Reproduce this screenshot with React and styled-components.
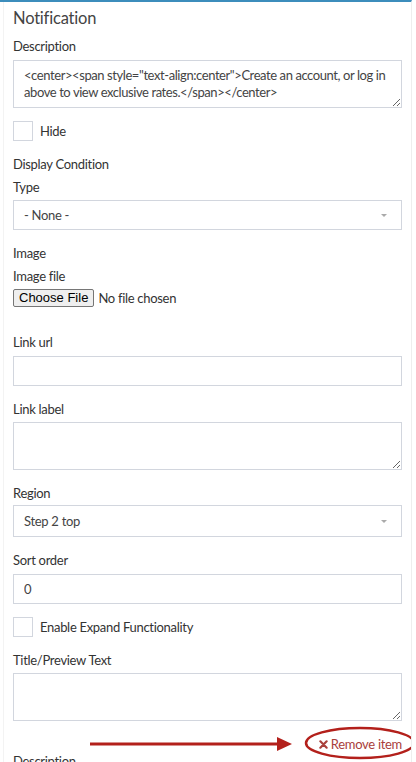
import React from "react";
import styled, { createGlobalStyle } from "styled-components";

const GlobalStyle = createGlobalStyle`
  body {
    margin: 0;
    background: #fff;
    font-family: "Source Sans Pro", Lato, "Open Sans", sans-serif;
    letter-spacing: -0.3px;
    color: #333;
  }
`;

const Panel = styled.div`
  width: 411px;
  border-top: 2px solid #3c8dbc;
  border-right: 1px solid #eeeeee;
  height: 760px;
  overflow: hidden;
`;

const Inner = styled.div`
  margin-left: 3px;
  border-left: 1px solid #f3f3f3;
  padding: 4px 9px 0 9px;
  min-height: 100%;
`;

const Title = styled.h3`
  margin: 0 0 6px;
  font-size: 16.5px;
  line-height: 24px;
  font-weight: 400;
  letter-spacing: -0.2px;
  color: #444;
`;

const Group = styled.div`
  margin-bottom: ${(p) => (p.$tight ? "3px" : "13px")};
`;

const Label = styled.div`
  font-size: 13px;
  line-height: 20px;
  color: #333;
  margin-bottom: ${(p) => (p.$gap ? p.$gap : "4px")};
`;

const TextArea = styled.textarea`
  display: block;
  box-sizing: border-box;
  width: 100%;
  height: 48px;
  margin: 0;
  padding: 6px 10px;
  border: 1px solid #d2d6de;
  border-radius: 0;
  font-family: inherit;
  font-size: 13px;
  letter-spacing: -0.42px;
  line-height: 17px;
  color: #444;
  resize: vertical;
  outline: none;
`;

const Input = styled.input`
  display: block;
  box-sizing: border-box;
  width: 100%;
  height: 30px;
  margin: 0;
  padding: 0 10px;
  border: 1px solid #d2d6de;
  border-radius: 0;
  font-family: inherit;
  font-size: 13px;
  color: #444;
  outline: none;
`;

const Select = styled.div`
  display: flex;
  align-items: center;
  justify-content: space-between;
  box-sizing: border-box;
  height: ${(p) => p.$h || "30px"};
  padding: 0 14px 0 10px;
  border: 1px solid #d2d6de;
  font-size: 13px;
  color: #444;
`;

const Caret = styled.span`
  width: 0;
  height: 0;
  border-left: 3px solid transparent;
  border-right: 3px solid transparent;
  border-top: 3px solid #aaa;
`;

const CheckRow = styled.label`
  display: flex;
  align-items: center;
  gap: 7px;
  font-size: 13px;
  color: #333;
  margin-bottom: 13px;
`;

const Box = styled.span`
  box-sizing: border-box;
  width: 20px;
  height: 20px;
  border: 1px solid #d2d6de;
  background: #fff;
`;

const FileRow = styled.div`
  display: flex;
  align-items: center;
  gap: 4px;
  margin-bottom: 25px;
  font-size: 13px;
  color: #333;
`;

const FileButton = styled.button`
  box-sizing: border-box;
  height: 18px;
  padding: 0 5px;
  border: 1px solid #767676;
  border-radius: 2px;
  background: #efefef;
  font-family: "Liberation Sans", Arial, sans-serif;
  font-size: 13px;
  letter-spacing: 0;
  color: #000;
  line-height: 16px;
`;

const RemoveRow = styled.div`
  position: relative;
  display: flex;
  justify-content: flex-end;
  margin-top: 15px;
  height: 17px;
  margin-bottom: -2px;
`;

const RemoveLink = styled.a`
  display: flex;
  align-items: center;
  gap: 3px;
  font-size: 13px;
  line-height: 17px;
  color: #a9403b;
  text-decoration: none;
`;

const Annotation = styled.svg`
  position: absolute;
  left: -13px;
  top: -17px;
  pointer-events: none;
`;

export default function App() {
  return (
    <>
      <GlobalStyle />
      <Panel>
        <Inner>
          <Title>Notification</Title>

          <Group>
            <Label>Description</Label>
            <TextArea
              defaultValue={
                '<center><span style="text-align:center">Create an account, or log in above to view exclusive rates.</span></center>'
              }
            />
          </Group>

          <CheckRow>
            <Box />
            Hide
          </CheckRow>

          <Label $gap="3px">Display Condition</Label>
          <Group>
            <Label $gap="3px">Type</Label>
            <Select>
              - None -
              <Caret />
            </Select>
          </Group>

          <Label $gap="3px">Image</Label>
          <Label $gap="3px">Image file</Label>
          <FileRow>
            <FileButton type="button">Choose File</FileButton>
            No file chosen
          </FileRow>

          <Group>
            <Label>Link url</Label>
            <Input />
          </Group>

          <Group>
            <Label $gap="3px">Link label</Label>
            <TextArea />
          </Group>

          <Group>
            <Label $gap="2px">Region</Label>
            <Select $h="32px">
              Step 2 top
              <Caret />
            </Select>
          </Group>

          <Group>
            <Label>Sort order</Label>
            <Input defaultValue="0" />
          </Group>

          <CheckRow>
            <Box />
            Enable Expand Functionality
          </CheckRow>

          <Group $tight>
            <Label $gap="3px">Title/Preview Text</Label>
            <TextArea />
          </Group>

          <RemoveRow>
            <RemoveLink href="#">
              <svg width="9" height="9" viewBox="0 0 10 10">
                <path d="M1.5 1.5 L8.5 8.5 M8.5 1.5 L1.5 8.5" stroke="#a9403b" strokeWidth="2.4" strokeLinecap="round" />
              </svg>
              Remove item
            </RemoveLink>
            <Annotation width="416" height="50" viewBox="0 0 416 50">
              <line x1="90" y1="25" x2="280" y2="25" stroke="#b3201b" strokeWidth="3" />
              <polygon points="277,18 292,25 277,32" fill="#b3201b" />
              <ellipse cx="360" cy="24" rx="54" ry="15" fill="none" stroke="#b3201b" strokeWidth="2.5" />
            </Annotation>
          </RemoveRow>

          <Label>Description</Label>
        </Inner>
      </Panel>
    </>
  );
}
